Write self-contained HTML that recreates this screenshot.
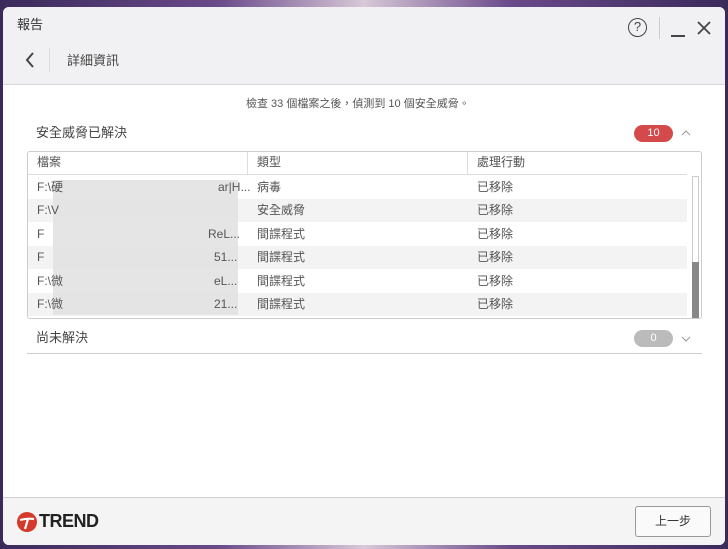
<!DOCTYPE html>
<html><head><meta charset="utf-8"><style>
*{margin:0;padding:0;box-sizing:border-box}
body{width:728px;height:549px;overflow:hidden;background:linear-gradient(90deg,#3a2a5a,#6a4a8a 30%,#d8c8d8 50%,#6a4a8a 70%,#3a2a5a);font-family:"Liberation Sans","Noto Sans CJK TC",sans-serif;color:#333;position:relative}
.win{position:absolute;left:3px;top:7px;width:722px;height:538px;border-radius:6px;overflow:hidden;background:#fff}
.hdr{position:absolute;left:0;top:0;width:722px;height:78px;background:#f1f1f3;border-bottom:1px solid #d8d8d8}
.ftr{position:absolute;left:0;top:490px;width:722px;height:48px;background:#f4f4f5;border-top:1px solid #d0d0d0}
.a{position:absolute;white-space:nowrap}
.t{font-size:13px;color:#444}
.cell{position:absolute;font-size:12px;color:#555;line-height:14px}
</style></head><body>
<div class="win">
<div class="hdr">
 <div class="a" style="left:14px;top:7px;font-size:13px;color:#333">報告</div>
 <div class="a" style="left:625px;top:11px;width:19px;height:19px;border:1.5px solid #444;border-radius:50%;font-size:13px;text-align:center;line-height:16px;color:#444">?</div>
 <div class="a" style="left:656px;top:10px;width:1px;height:22px;background:#ccc"></div>
 <div class="a" style="left:668px;top:28px;width:14px;height:2px;background:#444"></div>
 <svg class="a" style="left:694px;top:14px" width="14" height="14"><path d="M1 1L13 13M13 1L1 13" stroke="#444" stroke-width="1.8"/></svg>
 <svg class="a" style="left:21px;top:44px" width="12" height="18"><path d="M9 2L3 9L9 16" stroke="#444" stroke-width="2" fill="none"/></svg>
 <div class="a" style="left:46px;top:41px;width:1px;height:24px;background:#ddd"></div>
 <div class="a" style="left:64px;top:43px;font-size:13px;color:#444">詳細資訊</div>
</div>
<div class="a" style="left:243px;top:88px;font-size:11px;color:#555">檢查 33 個檔案之後，偵測到 10 個安全威脅。</div>
<div class="a t" style="left:33px;top:115px">安全威脅已解決</div>
<div class="a" style="left:631px;top:118px;width:39px;height:17px;border-radius:9px;background:#d44a4a;color:#fff;font-size:11px;text-align:center;line-height:17px">10</div>
<svg class="a" style="left:678px;top:122px" width="10" height="8"><path d="M1 6L5 2L9 6" stroke="#999" fill="none"/></svg>
<div class="a" style="left:24px;top:144px;width:675px;height:168px;border:1px solid #ccc;border-radius:3px;overflow:hidden">
 <div class="a" style="left:0;top:0;width:659px;height:23px;border-bottom:1px solid #ddd"></div>
 <div class="a" style="left:219px;top:0;width:1px;height:23px;background:#ddd"></div>
 <div class="a" style="left:439px;top:0;width:1px;height:23px;background:#ddd"></div>
 <div class="cell" style="left:9px;top:3px">檔案</div>
 <div class="cell" style="left:229px;top:3px">類型</div>
 <div class="cell" style="left:449px;top:3px">處理行動</div>
 <div class="a" style="left:0;top:47px;width:659px;height:23px;background:#f3f3f3"></div>
 <div class="a" style="left:0;top:94px;width:659px;height:23px;background:#f3f3f3"></div>
 <div class="a" style="left:0;top:141px;width:659px;height:23px;background:#f3f3f3"></div>
 <div class="a" style="left:664px;top:24px;width:7px;height:142px;border:1px solid #ccc"></div>
 <div class="a" style="left:664px;top:110px;width:7px;height:56px;background:#888"></div>
 <div class="a" style="left:25px;top:28px;width:185px;height:135px;background:#e2e2e2;opacity:.9"></div>
 <div class="cell" style="left:9px;top:28px">F:\硬</div><div class="cell" style="left:190px;top:28px">ar|H...</div><div class="cell" style="left:229px;top:28px">病毒</div><div class="cell" style="left:449px;top:28px">已移除</div>
 <div class="cell" style="left:9px;top:51px">F:\V</div><div class="cell" style="left:229px;top:51px">安全威脅</div><div class="cell" style="left:449px;top:51px">已移除</div>
 <div class="cell" style="left:9px;top:75px">F</div><div class="cell" style="left:180px;top:75px">ReL...</div><div class="cell" style="left:229px;top:75px">間諜程式</div><div class="cell" style="left:449px;top:75px">已移除</div>
 <div class="cell" style="left:9px;top:98px">F</div><div class="cell" style="left:186px;top:98px">51...</div><div class="cell" style="left:229px;top:98px">間諜程式</div><div class="cell" style="left:449px;top:98px">已移除</div>
 <div class="cell" style="left:9px;top:122px">F:\微</div><div class="cell" style="left:186px;top:122px">eL...</div><div class="cell" style="left:229px;top:122px">間諜程式</div><div class="cell" style="left:449px;top:122px">已移除</div>
 <div class="cell" style="left:9px;top:145px">F:\微</div><div class="cell" style="left:186px;top:145px">21...</div><div class="cell" style="left:229px;top:145px">間諜程式</div><div class="cell" style="left:449px;top:145px">已移除</div>
</div>
<div class="a t" style="left:33px;top:320px">尚未解決</div>
<div class="a" style="left:631px;top:323px;width:39px;height:17px;border-radius:9px;background:#bbb;color:#fff;font-size:11px;text-align:center;line-height:17px">0</div>
<svg class="a" style="left:678px;top:328px" width="10" height="8"><path d="M1 2L5 6L9 2" stroke="#999" fill="none"/></svg>
<div class="a" style="left:24px;top:346px;width:675px;height:1px;background:#ccc"></div>
<div class="ftr">
 <div class="a" style="left:14px;top:14px;width:20px;height:20px;border-radius:50%;background:#d43a2a"></div>
 <svg class="a" style="left:14px;top:14px" width="20" height="20"><path d="M3 8Q10 6 17 7M11 7L8 17" stroke="#fff" stroke-width="2.2" fill="none"/></svg>
 <div class="a" style="left:36px;top:13px;font-size:18px;font-weight:bold;color:#222;letter-spacing:-0.5px">TREND</div>
 <div class="a" style="left:632px;top:8px;width:76px;height:31px;border:1px solid #999;border-radius:3px;background:#fafafa;font-size:12px;text-align:center;line-height:29px;color:#333">上一步</div>
</div>
</div>
</body></html>
